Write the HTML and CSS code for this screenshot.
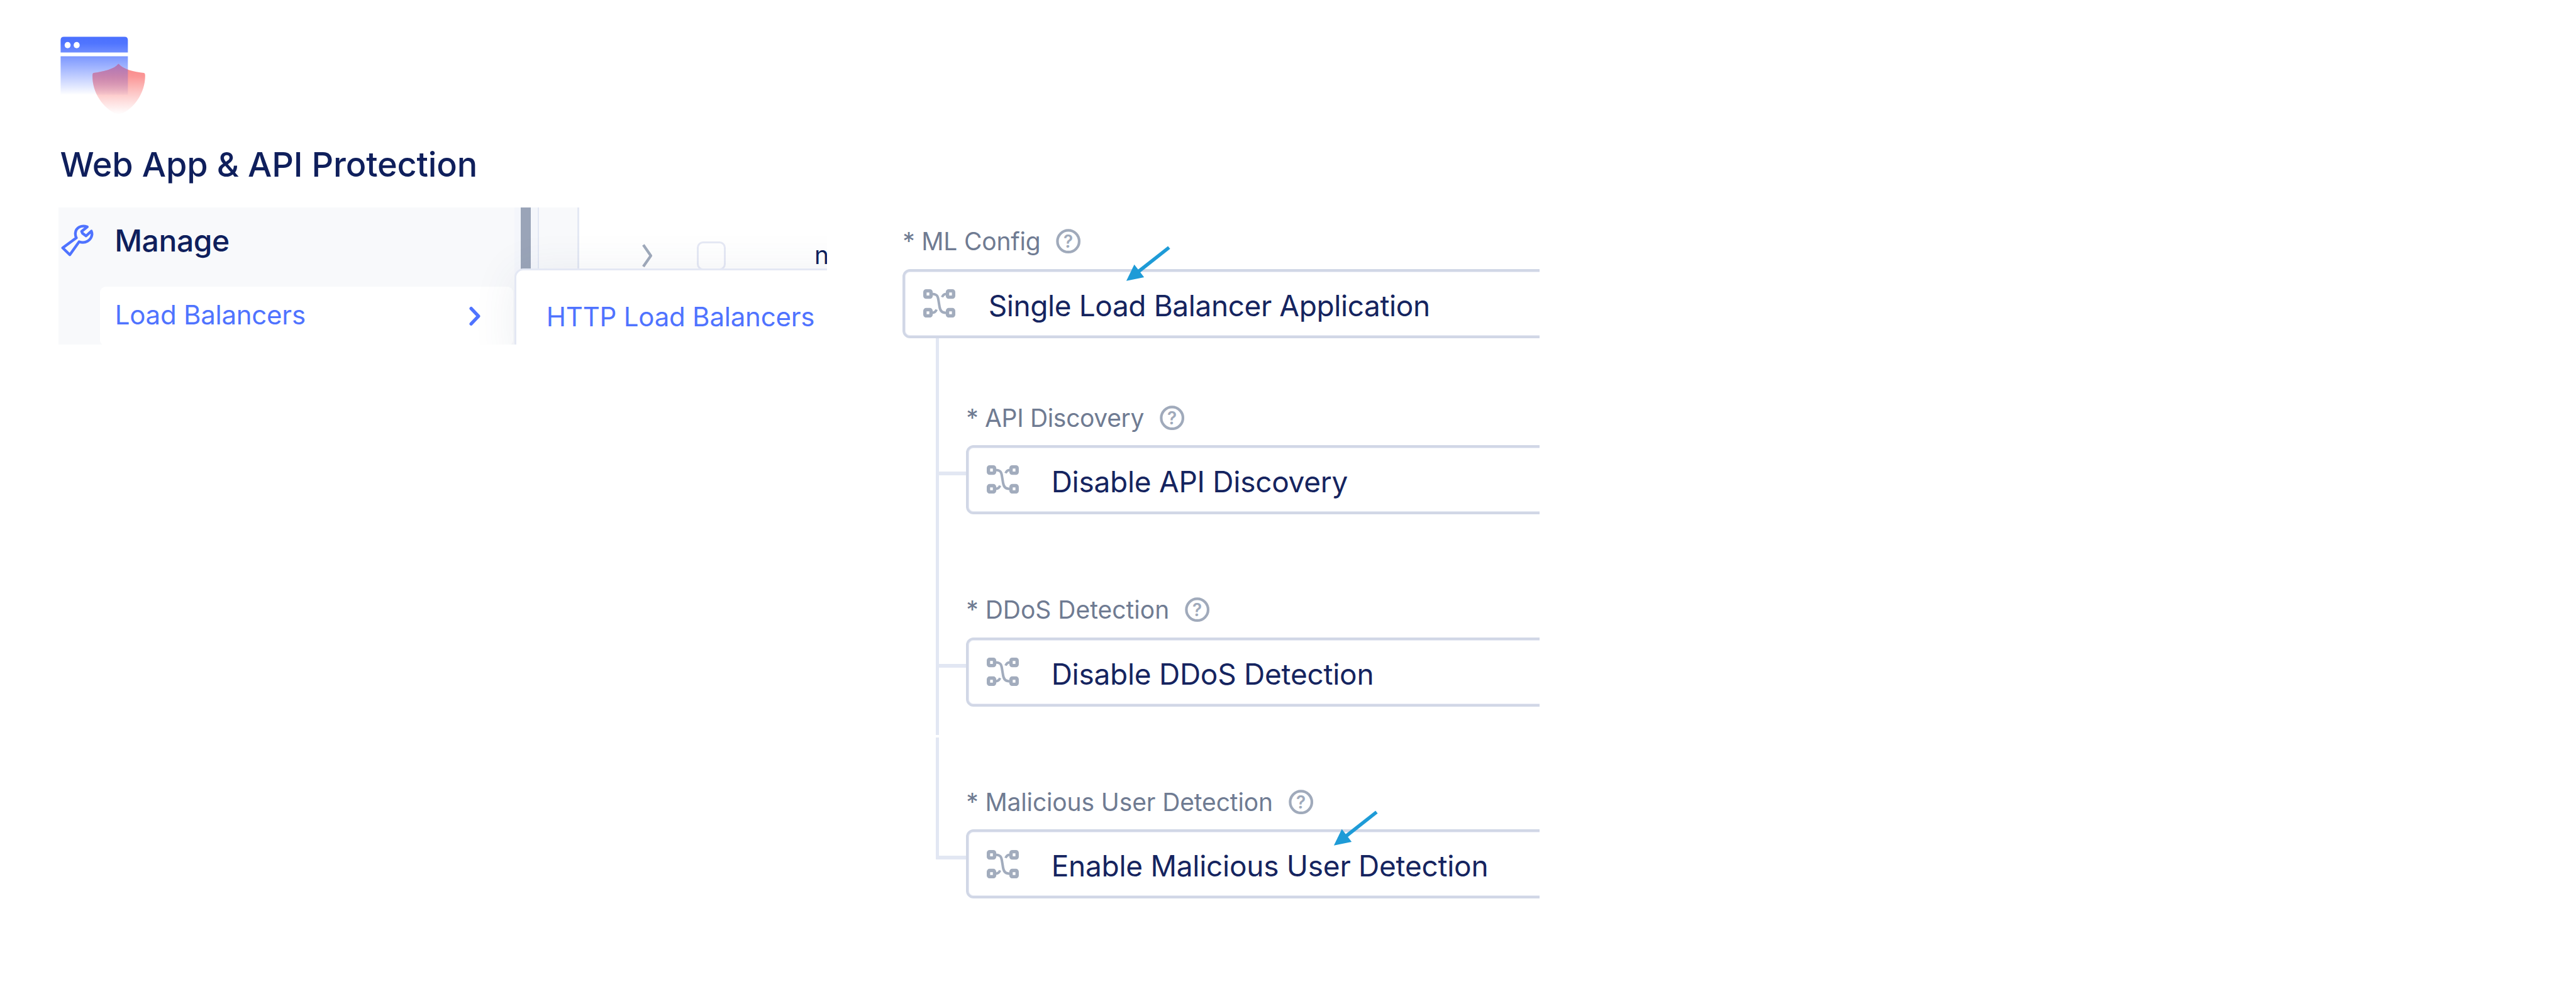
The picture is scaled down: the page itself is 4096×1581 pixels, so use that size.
FILE: index.html
```
<!DOCTYPE html>
<html lang="en">
<head>
<meta charset="utf-8">
<title>Web App &amp; API Protection</title>
<link rel="stylesheet" href="styles.css">
</head>
<body>
<svg class="defs" aria-hidden="true">
  <defs>
    <symbol id="branch" viewBox="0 0 53 47">
      <g fill="none" stroke="#a2acbd">
        <g stroke-width="5.600">
          <rect x="2.800" y="2.800" width="10.100" height="10.300" rx="2"/>
          <rect x="40.200" y="2.800" width="10.100" height="10.300" rx="2"/>
          <rect x="2.800" y="33.900" width="10.100" height="10.300" rx="2"/>
          <rect x="40.200" y="33.900" width="10.100" height="10.300" rx="2"/>
        </g>
        <path stroke-width="4.200" d="M14 7.700C22 8 24 10.500 25 17L27 29C28.300 36.500 31 39 39 39.300M38.500 7.700C34.500 7.900 32.500 9.500 31.200 13.200M14.500 39.300C18.500 39.100 20.700 37.500 22 33.800"/>
      </g>
    </symbol>
    <symbol id="help" viewBox="0 0 41 41">
      <circle cx="20.500" cy="20.500" r="18" fill="none" stroke="#a0aabb" stroke-width="4.400"/>
      <text x="20.500" y="31.200" text-anchor="middle" class="help-mark">?</text>
    </symbol>
    <symbol id="arrow" viewBox="0 0 76 62">
      <g fill="#1e9bd7">
        <path d="M2 58L15.200 31L31.500 52Z"/>
        <path d="M20.500 40L71 0.500L74.600 5L24.500 44.500Z"/>
      </g>
    </symbol>
  </defs>
</svg>
<main class="page">
  <section class="product">
    <svg class="product-icon" viewBox="100 60 142 130">
      <defs>
        <linearGradient id="win" gradientUnits="userSpaceOnUse" x1="0" y1="60" x2="0" y2="157">
          <stop offset="0" stop-color="#4a70ff"/><stop offset=".12" stop-color="#5075ff"/><stop offset="1" stop-color="#4f73ff" stop-opacity="0"/>
        </linearGradient>
        <linearGradient id="shield" x1="0" y1="0" x2="0" y2="1">
          <stop offset="0" stop-color="#f96a6a" stop-opacity=".82"/><stop offset=".25" stop-color="#f96a6a" stop-opacity=".7"/><stop offset="1" stop-color="#fb7d7a" stop-opacity="0"/>
        </linearGradient>
        <linearGradient id="overlap" gradientUnits="userSpaceOnUse" x1="0" y1="105" x2="0" y2="157">
          <stop offset="0" stop-color="#9a76c8" stop-opacity=".8"/><stop offset="1" stop-color="#c08fc0" stop-opacity=".08"/>
        </linearGradient>
        <clipPath id="win-clip"><rect x="100.400" y="92.700" width="111.400" height="64"/></clipPath>
      </defs>
      <path fill="url(#win)" d="M100.400 86.500V66q0-5.500 5.500-5.500h100.400q5.500 0 5.500 5.500v20.500zM100.400 92.700h111.400v64H100.400z"/>
      <ellipse cx="112" cy="74.300" rx="5" ry="5.300" fill="#fff"/>
      <ellipse cx="127" cy="74.300" rx="5" ry="5.300" fill="#fff"/>
      <path fill="url(#shield)" d="M196.300 105.300C204 114.500 222 118.500 238.500 120.500Q240.400 121 240.400 124C241 153 222 180 200 188.500Q196.300 190 192.500 188.500C170 178 152.500 153 153.200 124Q153.200 121 155 120.500C171 118 189 114.500 196.300 105.300Z"/>
      <path clip-path="url(#win-clip)" fill="url(#overlap)" d="M196.300 105.300C204 114.500 222 118.500 238.500 120.500Q240.400 121 240.400 124C241 153 222 180 200 188.500Q196.300 190 192.500 188.500C170 178 152.500 153 153.200 124Q153.200 121 155 120.500C171 118 189 114.500 196.300 105.300Z"/>
    </svg>
    <h1 class="product-title">Web App &amp; API Protection</h1>
    <div class="nav-panel">
      <nav class="sidebar">
        <div class="nav-group">
          <svg class="wrench" viewBox="101 371 54 53">
            <path fill="none" stroke="#4f73ff" stroke-width="4.500" stroke-linejoin="round" d="M103.800 409.800L115.600 421.300L131 399.600C141 403.500 151 397.500 152.300 388Q152.500 385 151.300 382L142.500 390L136.500 385.500L135.200 382.500L144.500 375C135 371.500 125.500 376 124.800 385.500Q124.600 390 126.500 393.200Z"/>
          </svg>
          <span>Manage</span>
        </div>
        <a class="nav-item">
          <span>Load Balancers</span>
          <svg class="chevron" viewBox="776 508 21 33"><path fill="none" stroke="#4f73ff" stroke-width="5.500" stroke-linecap="round" stroke-linejoin="round" d="M780.300 511.800L792.500 524.500L780.300 537.300"/></svg>
        </a>
      </nav>
      <div class="scroll-track"><div class="scroll-thumb"></div></div>
      <div class="gutter"></div>
      <div class="list-row">
        <svg class="row-chevron" viewBox="1063 404 20 39"><path fill="none" stroke="#a0aabb" stroke-width="4.500" stroke-linejoin="round" d="M1066 405.500L1078.500 423.500L1066 441.500"/></svg>
        <span class="checkbox"></span>
        <span class="row-name">n</span>
      </div>
      <div class="flyout"><a>HTTP Load Balancers</a></div>
    </div>
  </section>
  <section class="form">
    <div class="field">
      <div class="label"><span class="ls-ml">* ML Config</span><svg class="help"><use href="#help"/></svg></div>
      <div class="select"><svg class="branch"><use href="#branch"/></svg><span class="value-single">Single Load Balancer Application</span></div>
      <svg class="arrow arrow-ml"><use href="#arrow"/></svg>
    </div>
    <div class="child child-api">
      <div class="rail"><div class="elbow"></div><div class="drop"></div></div>
      <div class="field">
        <div class="label"><span class="ls-api">* API Discovery</span><svg class="help"><use href="#help"/></svg></div>
        <div class="select"><svg class="branch"><use href="#branch"/></svg><span>Disable API Discovery</span></div>
      </div>
    </div>
    <div class="child child-ddos">
      <div class="rail"><div class="elbow"></div><div class="drop"></div></div>
      <div class="field">
        <div class="label"><span>* DDoS Detection</span><svg class="help"><use href="#help"/></svg></div>
        <div class="select"><svg class="branch"><use href="#branch"/></svg><span>Disable DDoS Detection</span></div>
      </div>
    </div>
    <div class="child child-user">
      <div class="rail"><div class="elbow"></div></div>
      <div class="field">
        <div class="label"><span class="ls-user">* Malicious User Detection</span><svg class="help"><use href="#help"/></svg></div>
        <div class="select"><svg class="branch"><use href="#branch"/></svg><span>Enable Malicious User Detection</span></div>
        <svg class="arrow arrow-user"><use href="#arrow"/></svg>
      </div>
    </div>
  </section>
</main>
</body>
</html>
```
FILE: styles.css
```
html { font-size: 9.6px; }
* { box-sizing: border-box; }
body { margin: 0; background: #fff; font-family: Inter, "Liberation Sans", sans-serif; color: #0f1f5c; overflow: hidden; }
svg { display: block; flex: none; }
.defs { position: absolute; width: 0; height: 0; }
.page { display: flex; width: 4096px; height: 1581px; }

/* Product column */
.product { width: 149.5rem; flex: none; padding: 6rem 0 0 9.7rem; }
.product-icon { width: 14.2rem; height: 13rem; margin-left: .3rem; }
.product-title { margin: 5.28rem 0 0 .24rem; height: 6rem; line-height: 6rem; font-size: 54px; font-weight: 500; letter-spacing: -.14px; white-space: nowrap; }
.nav-panel { position: relative; display: flex; width: 127.3rem; height: 22.67rem; margin-top: 4.12rem; overflow: hidden; }
.sidebar { width: 75.5rem; flex: none; background: #f8f9fb; }
.nav-group { display: flex; align-items: center; gap: 3.48rem; height: 10.96rem; padding-left: .4rem; font-size: 48px; font-weight: 500; letter-spacing: -.4px; }
.wrench { width: 5.4rem; height: 5.3rem; }
.nav-item { display: flex; align-items: center; justify-content: space-between; height: 9.8rem; margin: 2.17rem .2rem 0 6.89rem; padding: 0 5.3rem .5rem 2.44rem; background: #fff; border-radius: 9px; color: #4f73ff; font-size: 42px; letter-spacing: -.24px; }
.chevron { width: 2.1rem; height: 3.3rem; margin-top: .5rem; }
.scroll-track { width: 4.1rem; flex: none; padding-left: 1.04rem; background: #f4f6fb; border-right: 2px solid #e2e7f4; }
.scroll-thumb { width: 1.72rem; height: 10.2rem; background: #9aa4b8; }
.gutter { width: 6.6rem; flex: none; background: #f8f9fb; border-right: 3px solid #e4e8f4; }
.list-row { display: flex; align-items: flex-start; flex: 1; padding: 5.6rem 0 0 10.4rem; white-space: nowrap; }
.row-chevron { width: 2rem; height: 3.9rem; margin-top: .4rem; }
.checkbox { width: 4.75rem; height: 4.75rem; flex: none; margin-left: 7.16rem; border: 3px solid #e6e9f5; border-radius: 10px; background: #fff; }
.row-name { margin: .3rem 0 0 14.7rem; line-height: 4rem; font-size: 39px; }
.flyout { position: absolute; left: 75.5rem; top: 10.1rem; width: 60rem; height: 16rem; padding: 4.9rem 0 0 4.99rem; background: #fff; border: 3px solid #e4e8f4; border-radius: 14px; box-shadow: 0 6px 70px rgba(50, 75, 110, .09); color: #4f73ff; font-size: 42px; line-height: 5.7rem; letter-spacing: -.22px; white-space: nowrap; }

/* Form column */
.form { width: 105.5rem; flex: none; padding-top: 37.9rem; overflow: hidden; }
.field { position: relative; flex: 1; }
.label { display: flex; align-items: center; gap: 2.6rem; height: 4.2rem; margin-bottom: 2.47rem; color: #6f7b92; font-size: 39px; white-space: nowrap; }
.ls-ml { letter-spacing: -.2px; }
.ls-api { letter-spacing: -.33px; }
.ls-user { letter-spacing: -.13px; }
.help { width: 4.1rem; height: 4.1rem; }
.help-mark { font: 600 29px Inter, sans-serif; fill: #a0aabb; }
.select { display: flex; align-items: center; height: 11.44rem; margin-right: -3rem; padding-left: 3rem; border: 4px solid #d1d7e6; border-radius: 12px; box-shadow: inset 0 0 0 1px #e8ebf5; background: #fff; color: #15245f; font-size: 46px; letter-spacing: -.27px; white-space: nowrap; }
.branch { width: 5.3rem; height: 4.7rem; margin-right: 5.4rem; }
.select span { padding-top: .6rem; }
.select .value-single { padding-left: .1rem; letter-spacing: -.41px; }
.arrow { position: absolute; width: 7.6rem; height: 6.2rem; }
.arrow-ml { left: 36.88rem; top: 2.84rem; }

/* Nested fields, joined to the parent by a rail */
.child { display: flex; padding-left: 5.48rem; }
.rail { display: flex; flex-direction: column; width: 5.04rem; flex: none; }
.elbow { border-left: 5px solid #e2e7f3; border-bottom: 6px solid #e2e7f3; }
.drop { flex: 1; border-left: 5px solid #e2e7f3; }
.child-api .field { padding-top: 11.09rem; }
.child-api .elbow { height: 22.76rem; }
.child-ddos .field { padding: 13.73rem 0 4.73rem; }
.child-ddos .elbow { height: 25.4rem; }
.child-user { margin-top: .4rem; }
.child-user .field { padding-top: 8.59rem; }
.child-user .elbow { height: 20.26rem; }
.arrow-user { left: 60.76rem; top: 12.1rem; }
```
